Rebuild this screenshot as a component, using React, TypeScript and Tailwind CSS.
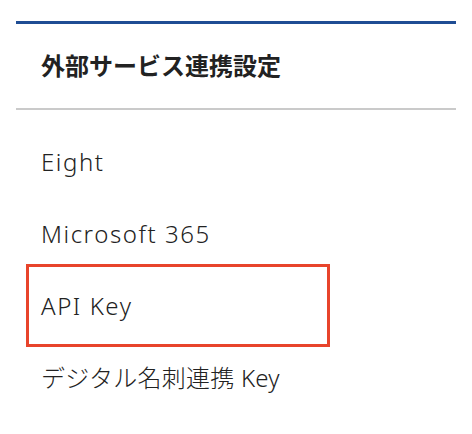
const items = [
  { id: 'eight', label: 'Eight', wide: true },
  { id: 'ms365', label: 'Microsoft 365', wide: true },
  { id: 'apikey', label: 'API Key', wide: true, highlighted: true },
  { id: 'digital', label: 'デジタル名刺連携 Key' },
];

export default function App() {
  return (
    <div className="min-h-[434px] bg-white pt-[21px] font-['Noto_Sans','Noto_Sans_CJK_JP',sans-serif]">
      <div className="mx-4 border-t-[3px] border-[#1f4d94]">
        {/* section title */}
        <div className="flex h-[86px] items-center border-b-2 border-[#cacaca] pl-[25px]">
          <h2 className="text-[24px] font-bold leading-none text-[#222]">外部サービス連携設定</h2>
        </div>

        <ul className="mt-4">
          {items.map((item) => (
            <li key={item.id} className="relative flex h-[72px] items-center pl-[25px]">
              <span
                className={
                  item.wide
                    ? 'text-[24px] font-light leading-none tracking-[0.065em] text-[#222]'
                    : 'text-[24px] font-light leading-none tracking-[0.01em] text-[#222]'
                }
              >
                {item.label}
              </span>
              {item.highlighted && (
                <div className="pointer-events-none absolute left-[10px] top-[-6px] h-[83px] w-[304px] border-[3px] border-[#e8442b]" />
              )}
            </li>
          ))}
        </ul>
      </div>
    </div>
  );
}
